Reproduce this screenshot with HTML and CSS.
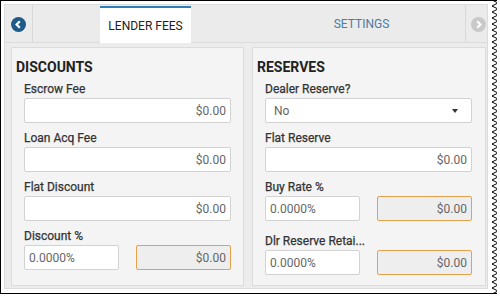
FILE: index.html
```html
<!DOCTYPE html>
<html lang="en">
<head>
    <meta charset="UTF-8">
    <meta name="viewport" content="width=device-width, initial-scale=1.0">
    <title>Lender Fees</title>
    <link rel="stylesheet" href="styles.css">
</head>
<body>

    <div class="frame">

        <!-- Torn right edge of the screenshot -->
        <svg class="torn-edge" width="8" height="296" viewBox="0 0 8 296">
            <polyline fill="none" stroke="#000" stroke-width="1"
                points="1,0 7,3 1,6 7,9 1,12 7,15 1,18 7,21 1,24 7,27 1,30 7,33 1,36 7,39 1,42 7,45 1,48 7,51 1,54 7,57 1,60 7,63 1,66 7,69 1,72 7,75 1,78 7,81 1,84 7,87 1,90 7,93 1,96 7,99 1,102 7,105 1,108 7,111 1,114 7,117 1,120 7,123 1,126 7,129 1,132 7,135 1,138 7,141 1,144 7,147 1,150 7,153 1,156 7,159 1,162 7,165 1,168 7,171 1,174 7,177 1,180 7,183 1,186 7,189 1,192 7,195 1,198 7,201 1,204 7,207 1,210 7,213 1,216 7,219 1,222 7,225 1,228 7,231 1,234 7,237 1,240 7,243 1,246 7,249 1,252 7,255 1,258 7,261 1,264 7,267 1,270 7,273 1,276 7,279 1,282 7,285 1,288 7,291 1,294"/>
        </svg>

        <div class="widget">

            <!-- Tabs -->
            <div class="tabbar">
                <div class="tab-nav tab-prev">
                    <svg width="15" height="15" viewBox="0 0 15 15">
                        <circle cx="7.5" cy="7.5" r="7.5" fill="#1d5a88"/>
                        <polyline points="8.8,4.2 5.6,7.5 8.8,10.8" fill="none" stroke="#fff" stroke-width="2.2"/>
                    </svg>
                </div>
                <div class="tabs">
                    <div class="tab-slot">
                        <div class="tab active">LENDER FEES</div>
                    </div>
                    <div class="tab-slot">
                        <div class="tab">SETTINGS</div>
                    </div>
                </div>
                <div class="tab-nav tab-next">
                    <svg width="15" height="15" viewBox="0 0 15 15">
                        <circle cx="7.5" cy="7.5" r="7.5" fill="#c9c9c9"/>
                        <polyline points="6.2,4.2 9.4,7.5 6.2,10.8" fill="none" stroke="#fff" stroke-width="2.2"/>
                    </svg>
                </div>
            </div>

            <!-- Panels -->
            <div class="content">

                <div class="panel">
                    <h2>DISCOUNTS</h2>

                    <div class="field">
                        <label>Escrow Fee</label>
                        <div class="input money">$0.00</div>
                    </div>

                    <div class="field">
                        <label>Loan Acq Fee</label>
                        <div class="input money">$0.00</div>
                    </div>

                    <div class="field">
                        <label>Flat Discount</label>
                        <div class="input money">$0.00</div>
                    </div>

                    <div class="field">
                        <label>Discount %</label>
                        <div class="split">
                            <div class="input">0.0000%</div>
                            <div class="input money calc">$0.00</div>
                        </div>
                    </div>
                </div>

                <div class="panel panel-right">
                    <h2>RESERVES</h2>

                    <div class="field">
                        <label>Dealer Reserve?</label>
                        <div class="input select">
                            <span>No</span>
                            <svg width="6" height="4" viewBox="0 0 6 4"><polygon points="0,0 6,0 3,4" fill="#333"/></svg>
                        </div>
                    </div>

                    <div class="field">
                        <label>Flat Reserve</label>
                        <div class="input money">$0.00</div>
                    </div>

                    <div class="field">
                        <label>Buy Rate %</label>
                        <div class="split">
                            <div class="input">0.0000%</div>
                            <div class="input money calc">$0.00</div>
                        </div>
                    </div>

                    <div class="field after-split">
                        <label>Dlr Reserve Retai...</label>
                        <div class="split">
                            <div class="input">0.0000%</div>
                            <div class="input money calc">$0.00</div>
                        </div>
                    </div>
                </div>

            </div>
        </div>
    </div>

</body>
</html>
```

FILE: styles.css
```css
body {
    margin: 0;
    padding: 0;
    background: #fff;
    font-family: Roboto, 'Liberation Sans', sans-serif;
    color: #333;
}

.frame {
    position: relative;
    width: 500px;
    height: 294px;
    box-sizing: border-box;
    border-top: 1px solid #000;
    border-bottom: 1px solid #000;
    padding: 3px 0 4px 4px;
    background: #fff;
    clip-path: polygon(0 0, 497px 0, 497px 100%, 0 100%);
}

.frame::before {
    content: '';
    position: absolute;
    left: 0;
    top: -1px;
    bottom: -1px;
    width: 1px;
    background: #000;
}

.torn-edge {
    position: absolute;
    left: 491px;
    top: -1px;
}

.widget {
    width: 484px;
    height: 100%;
    box-sizing: border-box;
    border: 1px solid #dcdcdc;
    background: #ececec;
    display: flex;
    flex-direction: column;
}

/* Tabs */
.tabbar {
    height: 38px;
    box-sizing: border-box;
    border-bottom: 1px solid #dcdcdc;
    background: #ebebeb;
    display: flex;
}

.tab-nav {
    display: flex;
    align-items: center;
    justify-content: center;
}

.tab-prev {
    width: 28px;
    box-sizing: border-box;
    border-right: 1px solid #d9d9d9;
    padding-top: 1px;
}

.tab-next {
    flex: 1;
    border-left: 1px solid #d9d9d9;
    padding: 1px 0 0 4px;
}

.tabs {
    width: 432px;
    display: grid;
    grid-template-columns: 225px 1fr;
}

.tab-slot {
    display: flex;
    justify-content: center;
}

.tab {
    font-size: 12px;
    color: #4b7ca3;
    display: flex;
    align-items: center;
    padding-top: 1px;
}

.tab.active {
    width: 91px;
    justify-content: center;
    margin-top: 1px;
    margin-bottom: -1px;
    border-top: 2px solid #2c7fb8;
    background: #fff;
    color: #222;
    padding-top: 0;
}

/* Panels */
.content {
    flex: 1;
    padding: 4px 1px 2px 6px;
    display: grid;
    grid-template-columns: 233px 234px;
    gap: 8px;
}

.panel {
    border: 1px solid #dcdcdc;
    background: #f4f4f4;
    padding: 11px 12px 0 4px;
}

.panel-right {
    padding-right: 13px;
}

h2 {
    margin: 0 0 7px 0;
    font-size: 14px;
    line-height: 16px;
    font-weight: 700;
    color: #222;
}

.field {
    margin: 0 0 8px 8px;
}

.field.after-split {
    margin-top: 13px;
}

label {
    display: block;
    font-size: 12px;
    line-height: 14px;
    font-weight: 400;
    color: #333;
    -webkit-text-stroke: 0.25px #333;
    margin-bottom: 2px;
}

.input {
    height: 25px;
    box-sizing: border-box;
    border: 1px solid #d2d2d2;
    border-radius: 2px;
    background: #fff;
    font-size: 12px;
    color: #666;
    display: flex;
    align-items: center;
    padding: 0 4px;
}

.input.money {
    justify-content: flex-end;
}

.input.calc {
    border-color: #e7a04c;
    background: #eeeeee;
}

.input.select {
    justify-content: space-between;
    padding: 0 13px 0 8px;
}

.split {
    display: grid;
    grid-template-columns: 95px 95px;
    gap: 17px;
}
```
